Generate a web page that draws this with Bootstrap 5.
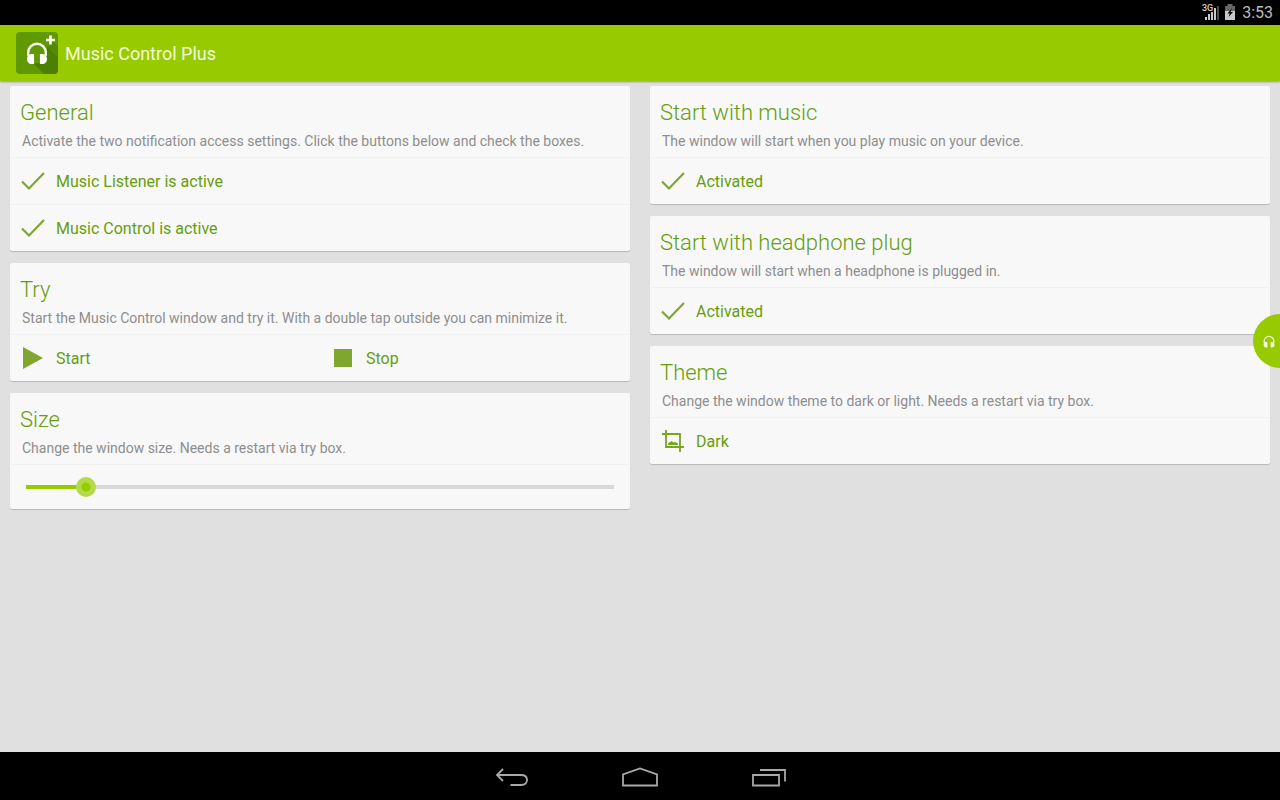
<!DOCTYPE html>
<html lang="en">
<head>
<meta charset="utf-8">
<meta name="viewport" content="width=device-width, initial-scale=1">
<title>Music Control Plus</title>
<link href="https://cdn.jsdelivr.net/npm/bootstrap@5.3.0/dist/css/bootstrap.min.css" rel="stylesheet">
<style>
  :root { --lime: #98ca00; --leaf: #669e0c; --icon: #7fa62e; }
  body { font-family: Roboto, "Liberation Sans", sans-serif; background: #e0e0e0; }
  .status-bar { height: 25px; background: #000; color: #bdbdbd; font-size: 16px; line-height: 24px; padding-right: 7px; }
  .status-bar .clock { margin-left: 6px; }
  .app-bar { height: 56px; background: var(--lime); box-shadow: 0 1px 2px rgba(0,0,0,.35); padding: 0 16px; gap: 7px; }
  .app-bar h1 { font-size: 18px; line-height: 24px; font-weight: 400; color: #f4fadc; padding-top: 2px; }
  .board { padding: 5px 10px; }
  .board > .row { --bs-gutter-x: 20px; }
  .stack { display: flex; flex-direction: column; gap: 12px; }
  .panel { background: #f8f8f8; border: 0; border-radius: 2px; box-shadow: 0 1px 1px rgba(0,0,0,.18); }
  .panel-head { height: 71px; padding: 13px 10px 0; }
  .panel-head h2 { font-size: 22px; line-height: 28px; font-weight: 300; color: var(--leaf); margin: 0; }
  .panel-head p { font-size: 14px; line-height: 20px; color: #8e8e8e; margin: 4px 0 0 2px; }
  .line { border-top: 1px solid #f1f1f1; }
  .action { height: 46px; padding: 0 10px; border: 0; background: none; color: var(--leaf); font-size: 16px; line-height: 24px; display: flex; align-items: center; gap: 10px; text-align: left; }
  .action svg { width: 26px; height: 26px; flex: none; }
  .action span { padding-top: 2px; }
  .size-row { height: 45px; padding: 0 6px; }
  .size-range { -webkit-appearance: none; appearance: none; width: 100%; height: 20px; margin: 0; display: block;
    background: linear-gradient(to right, var(--lime) var(--fill), #d8d8d8 0) center / calc(100% - 20px) 4px no-repeat; }
  .size-range::-webkit-slider-thumb { -webkit-appearance: none; width: 20px; height: 20px; border-radius: 50%; background: radial-gradient(circle, #98ca00 4px, #b3da48 5px); }
  .size-range::-moz-range-thumb { width: 20px; height: 20px; border: 0; border-radius: 50%; background: radial-gradient(circle, #98ca00 4px, #b3da48 5px); }
  .bubble { position: fixed; right: -27px; top: 314px; width: 54px; height: 54px; border: 0; border-radius: 50%; background: var(--lime); padding: 0 0 0 10px; text-align: left; line-height: 0; }
  .nav-keys { height: 48px; background: #000; gap: 88px; }
  .nav-keys button { border: 0; background: none; padding: 3px 0 0; width: 40px; height: 48px; line-height: 0; }
</style>
</head>
<body>
<svg width="0" height="0" class="position-absolute" aria-hidden="true">
  <symbol id="check" viewBox="0 0 26 26"><path d="M2 13.5 9 20.5 24 5" fill="none" stroke="#7fa62e" stroke-width="2.2"/></symbol>
  <symbol id="phones" viewBox="0 0 24 26"><path d="M2.4 16V12.500a9.600 9.600 0 0 1 19.200 0V16" fill="none" stroke="currentColor" stroke-width="2.600"/><path d="M8.800 14v11H6.500C3 25 1.100 22.500 1.100 19.500S3 14 6.500 14zM15.200 14v11h2.300c3.500 0 5.400-2.500 5.400-5.500S21 14 17.500 14z" fill="currentColor"/></symbol>
</svg>
<div class="min-vh-100 d-flex flex-column">
  <div class="status-bar d-flex justify-content-end align-items-center">
    <svg width="18" height="19" viewBox="0 0 18 19" class="me-1" aria-label="3G signal" role="img">
      <path d="M3 17v-3h2v3zM6 17v-6h2v6zM9 17V9h2v8zM12 17V5h2v12z" fill="#c8c8c8"/><path d="M15 17V3h2v14z" fill="#4b4b4b"/>
      <text x="0" y="8" font-size="9" font-weight="500" fill="#d0d0d0">3G</text>
    </svg>
    <svg width="12" height="17" viewBox="0 0 12 17" aria-label="Battery charging" role="img">
      <path d="M3.500 0h5v2H11v5H1V2h2.500z" fill="#666"/><path d="M1 7h10v9H1z" fill="#c8c8c8"/><path d="M8 4 3.500 9.500h2.300L4.500 13 9 8H6.500z" fill="#000"/>
    </svg>
    <span class="clock">3:53</span>
  </div>
  <header class="app-bar d-flex align-items-center">
    <svg width="42" height="42" viewBox="0 0 42 42" aria-hidden="true">
      <rect width="42" height="42" rx="4" fill="#5f9a04"/>
      <path d="M31 14 42 25v13a4 4 0 0 1-4 4H28L17 31h14z" fill="#4d7f02"/><path d="M37 9 42 14v11L31 14z" fill="#548a03"/>
      <use href="#phones" x="10" y="9" width="22" height="24" color="#fff"/>
      <path d="M34.500 3.500v9M30 8h9" stroke="#fff" stroke-width="2.600"/>
    </svg>
    <h1 class="m-0">Music Control Plus</h1>
  </header>
  <main class="board flex-grow-1">
    <div class="row">
      <div class="col-6"><div class="stack">
        <section class="card panel">
          <div class="panel-head"><h2>General</h2><p>Activate the two notification access settings. Click the buttons below and check the boxes.</p></div>
          <div class="line"><button type="button" class="action w-100"><svg><use href="#check"/></svg><span>Music Listener is active</span></button></div>
          <div class="line"><button type="button" class="action w-100"><svg><use href="#check"/></svg><span>Music Control is active</span></button></div>
        </section>
        <section class="card panel">
          <div class="panel-head"><h2>Try</h2><p>Start the Music Control window and try it. With a double tap outside you can minimize it.</p></div>
          <div class="line d-flex">
            <button type="button" class="action w-50"><svg viewBox="0 0 26 26"><path d="M3 2v22l20-11z" fill="#7fa62e"/></svg><span>Start</span></button>
            <button type="button" class="action w-50"><svg viewBox="0 0 26 26"><path d="M4 4h18v18H4z" fill="#7fa62e"/></svg><span>Stop</span></button>
          </div>
        </section>
        <section class="card panel">
          <div class="panel-head"><h2><label for="size">Size</label></h2><p>Change the window size. Needs a restart via try box.</p></div>
          <div class="line size-row d-flex align-items-center"><input type="range" id="size" class="size-range" min="0" max="98" value="10" style="--fill: 10.2%"></div>
        </section>
      </div></div>
      <div class="col-6"><div class="stack">
        <section class="card panel">
          <div class="panel-head"><h2>Start with music</h2><p>The window will start when you play music on your device.</p></div>
          <div class="line"><button type="button" class="action w-100"><svg><use href="#check"/></svg><span>Activated</span></button></div>
        </section>
        <section class="card panel">
          <div class="panel-head"><h2>Start with headphone plug</h2><p>The window will start when a headphone is plugged in.</p></div>
          <div class="line"><button type="button" class="action w-100"><svg><use href="#check"/></svg><span>Activated</span></button></div>
        </section>
        <section class="card panel">
          <div class="panel-head"><h2>Theme</h2><p>Change the window theme to dark or light. Needs a restart via try box.</p></div>
          <div class="line"><button type="button" class="action w-100"><svg viewBox="0 0 26 26"><path d="M6 2v17h18M2 6h18v18" fill="none" stroke="#76a51f" stroke-width="1.800"/><path d="M8 17v-1.500l3.500-2.500 2.500 1.500 1.500-.5 2.500 1.500V17z" fill="#76a51f"/></svg><span>Dark</span></button></div>
        </section>
      </div></div>
    </div>
  </main>
  <nav class="nav-keys d-flex justify-content-center align-items-center" aria-label="System">
    <button type="button" aria-label="Back"><svg width="40" height="24" viewBox="0 0 40 24" fill="none" stroke="#a8a8a8" stroke-width="1.800"><path d="M11 3 5 9l6 6M5 9h24c4 0 6 2 6 4.800S33 19 29 19H18.500"/></svg></button>
    <button type="button" aria-label="Home"><svg width="40" height="24" viewBox="0 0 40 24" fill="none" stroke="#a8a8a8" stroke-width="1.800"><path d="M3 19.500V8.500L20 2.500l17 6v11z"/></svg></button>
    <button type="button" aria-label="Recent apps"><svg width="40" height="24" viewBox="0 0 40 24" fill="none" stroke="#a8a8a8" stroke-width="1.800"><path d="M5 9h26v10.500H5zM12 4h25v11.500"/></svg></button>
  </nav>
</div>
<button type="button" class="bubble" aria-label="Open music window"><svg width="12" height="13" color="#f4fadc"><use href="#phones"/></svg></button>
<script src="https://cdn.jsdelivr.net/npm/bootstrap@5.3.0/dist/js/bootstrap.bundle.min.js"></script>
</body>
</html>
